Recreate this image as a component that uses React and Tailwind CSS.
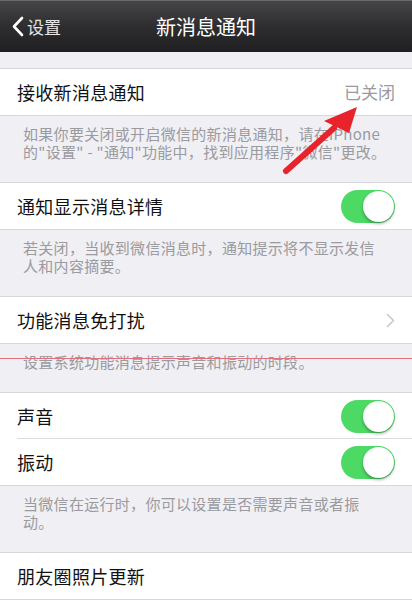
import React from 'react';

const font = { fontFamily: '"Noto Sans CJK SC", "Noto Sans", sans-serif' };

const Toggle = () => (
  <div className="relative w-[54px] h-[33px] rounded-full bg-[#4cd964]">
    <div className="absolute right-[1px] top-[1px] w-[31px] h-[31px] rounded-full bg-white shadow-[0_2px_3px_rgba(0,0,0,0.3)]" />
  </div>
);

const Row = ({ label, right, border }) => (
  <div className="relative h-[46px] bg-white flex items-center justify-between pl-[17px] pr-[17px]">
    <span className="text-[18px] text-[#111] tracking-[0.3px]">{label}</span>
    {right}
    {border && <div className="absolute left-[17px] right-0 bottom-0 h-px bg-[#dcdce0]" />}
  </div>
);

const Group = ({ children }) => (
  <div className="border-y border-[#d8d8dc]">{children}</div>
);

// footer notes keep the same line breaks as the iOS settings page
const Footer = ({ lines }) => (
  <div className="pt-[9px] pb-[21px] pl-[23px] text-[15px] leading-[18px] tracking-[0.3px] text-[#9a9a9f]">
    {lines.map((l) => (
      <div key={l} className="whitespace-nowrap">{l}</div>
    ))}
  </div>
);

const Chevron = () => (
  <svg width="9" height="15" viewBox="0 0 9 15" fill="none">
    <path d="M1.5 1.5 L7.5 7.5 L1.5 13.5" stroke="#c7c7cc" strokeWidth="1.6" strokeLinecap="round" strokeLinejoin="round" />
  </svg>
);

export default function App() {
  return (
    <div className="relative w-[412px] h-[600px] overflow-hidden bg-[#efeff4]" style={font}>
      {/* nav bar */}
      <div className="relative h-[52px] flex items-center justify-center bg-gradient-to-b from-[#454548] via-[#2e2e30] to-[#1f1f21] border-t border-[#6a6a6d]">
        <div className="absolute left-[11px] top-0 h-full flex items-center gap-[3px]">
          <svg width="13" height="21" viewBox="0 0 13 21" fill="none">
            <path d="M11 2 L3 10.5 L11 19" stroke="#fff" strokeWidth="2.6" strokeLinecap="round" strokeLinejoin="round" />
          </svg>
          <span className="text-[17px] text-[#e6e6e6]">设置</span>
        </div>
        <span className="text-[20px] text-white">新消息通知</span>
      </div>

      <div className="h-[16px]" />

      <Group>
        <Row label="接收新消息通知" right={<span className="text-[17px] text-[#9a9a9f]">已关闭</span>} />
      </Group>
      <Footer lines={['如果你要关闭或开启微信的新消息通知，请在iPhone', '的"设置" - "通知"功能中，找到应用程序"微信"更改。']} />

      <Group>
        <Row label="通知显示消息详情" right={<Toggle />} />
      </Group>
      <Footer lines={['若关闭，当收到微信消息时，通知提示将不显示发信', '人和内容摘要。']} />

      <Group>
        <Row label="功能消息免打扰" right={<Chevron />} />
      </Group>
      <Footer lines={['设置系统功能消息提示声音和振动的时段。']} />

      <Group>
        <Row label="声音" right={<Toggle />} border />
        <Row label="振动" right={<Toggle />} />
      </Group>
      <Footer lines={['当微信在运行时，你可以设置是否需要声音或者振', '动。']} />

      <Group>
        <Row label="朋友圈照片更新" />
      </Group>

      {/* red annotation line */}
      <div className="absolute left-0 right-0 top-[358px] h-px bg-[#e2707c]" />

      {/* red annotation arrow */}
      <svg className="absolute left-0 top-0 pointer-events-none" width="412" height="600" viewBox="0 0 412 600">
        <line x1="286" y1="171" x2="334" y2="128" stroke="#e8232b" strokeWidth="6" strokeLinecap="round" />
        <polygon points="357,107 324,121 349,133" fill="#e8232b" />
      </svg>
    </div>
  );
}
